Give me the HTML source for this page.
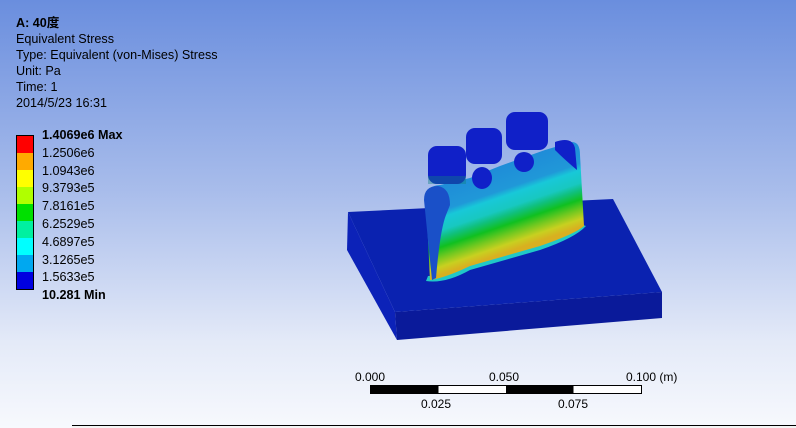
<!DOCTYPE html>
<html><head><meta charset="utf-8"><style>
html,body{margin:0;padding:0}
body{width:796px;height:428px;overflow:hidden;position:relative;background:linear-gradient(#6a8ede 0%,#a9bdeb 45%,#e4eaf8 80%,#f7f9fd 100%);font-family:"Liberation Sans","Noto Sans CJK SC",sans-serif;font-size:12.6px;color:#000}
.t{position:absolute;left:16px;line-height:16px;white-space:nowrap}
.leg{position:absolute;left:16px;top:135px;width:16px;border:1px solid #000}
.leg div{height:17px}
.lab{position:absolute;left:42px;line-height:17.8px;top:127px}
.s{position:absolute;font-size:12px}
</style></head><body>
<div class="t" style="top:15px"><b>A: 40度</b><br>Equivalent Stress<br>Type: Equivalent (von-Mises) Stress<br>Unit: Pa<br>Time: 1<br>2014/5/23 16:31</div>
<div class="leg">
<div style="background:#f00"></div><div style="background:#ffaa00"></div><div style="background:#ff0"></div><div style="background:#b0ff00"></div><div style="background:#00e000"></div><div style="background:#00f0a0"></div><div style="background:#0ff"></div><div style="background:#00a8f0"></div><div style="background:#0000e0"></div>
</div>
<div class="lab"><b>1.4069e6 Max</b><br>1.2506e6<br>1.0943e6<br>9.3793e5<br>7.8161e5<br>6.2529e5<br>4.6897e5<br>3.1265e5<br>1.5633e5<br><b>10.281 Min</b></div>
<svg width="796" height="428" style="position:absolute;left:0;top:0">
<defs>
<linearGradient id="g" gradientUnits="userSpaceOnUse" x1="445" y1="175" x2="475" y2="263">
<stop offset="0" stop-color="#1e88d8"/><stop offset="0.35" stop-color="#2098d8"/><stop offset="0.42" stop-color="#18c8d8"/><stop offset="0.55" stop-color="#18c8c0"/><stop offset="0.62" stop-color="#10c080"/><stop offset="0.72" stop-color="#10c020"/><stop offset="0.82" stop-color="#70c820"/><stop offset="0.92" stop-color="#c8d020"/><stop offset="1" stop-color="#d8b020"/>
</linearGradient>
</defs>
<polygon points="348,212 395,312 397,340 347,250" fill="#0c22b8"/>
<polygon points="395,312 662,292 662,318 397,340" fill="#0a1a9a"/>
<polygon points="348,212 613,199 662,292 395,312" fill="#0a22b0"/>
<path d="M426,281 Q445,284 470,270 L540,250 Q575,238 586,226 L580,224 Q560,238 470,264 Q440,276 428,276 Z" fill="#20c8c8"/>
<path d="M430,280 L426,200 Q425,186 440,185 L470,178 L500,166 L545,150 L572,142 Q580,142 580,155 L584,226 Q575,234 540,246 L470,266 Q445,278 430,280 Z" fill="url(#g)"/>
<path d="M432,280 L424,200 Q424,186 438,186 Q450,188 450,205 L446,215 Q440,230 436,278 Z" fill="#1a50c8"/>
<rect x="428" y="146" width="38" height="38" rx="9" fill="#1020c8"/>
<rect x="428" y="176" width="38" height="8" fill="#108080" opacity=".4"/>
<rect x="466" y="128" width="36" height="36" rx="9" fill="#1020c8"/>
<rect x="506" y="112" width="42" height="38" rx="9" fill="#1020c8"/>
<ellipse cx="482" cy="178" rx="10" ry="11" fill="#1020c8"/>
<ellipse cx="524" cy="162" rx="10" ry="10" fill="#1020c8"/>
<path d="M555,142 Q572,136 575,148 L577,170 Q565,160 555,150 Z" fill="#1020c8"/>
</svg>
<div class="s" style="left:355px;top:370px">0.000</div>
<div class="s" style="left:489px;top:370px">0.050</div>
<div class="s" style="left:626px;top:370px">0.100 (m)</div>
<div style="position:absolute;left:370px;top:385px;width:270px;height:7px;border:1px solid #000;background:linear-gradient(90deg,#000 0 25%,#fff 25% 50%,#000 50% 75%,#fff 75%)"></div>
<div class="s" style="left:421px;top:397px">0.025</div>
<div class="s" style="left:558px;top:397px">0.075</div>
<div style="position:absolute;left:72px;top:425px;width:724px;height:1px;background:#000"></div>
<div style="position:absolute;left:72px;top:426px;width:724px;height:2px;background:#f4f4f4"></div>
</body></html>
